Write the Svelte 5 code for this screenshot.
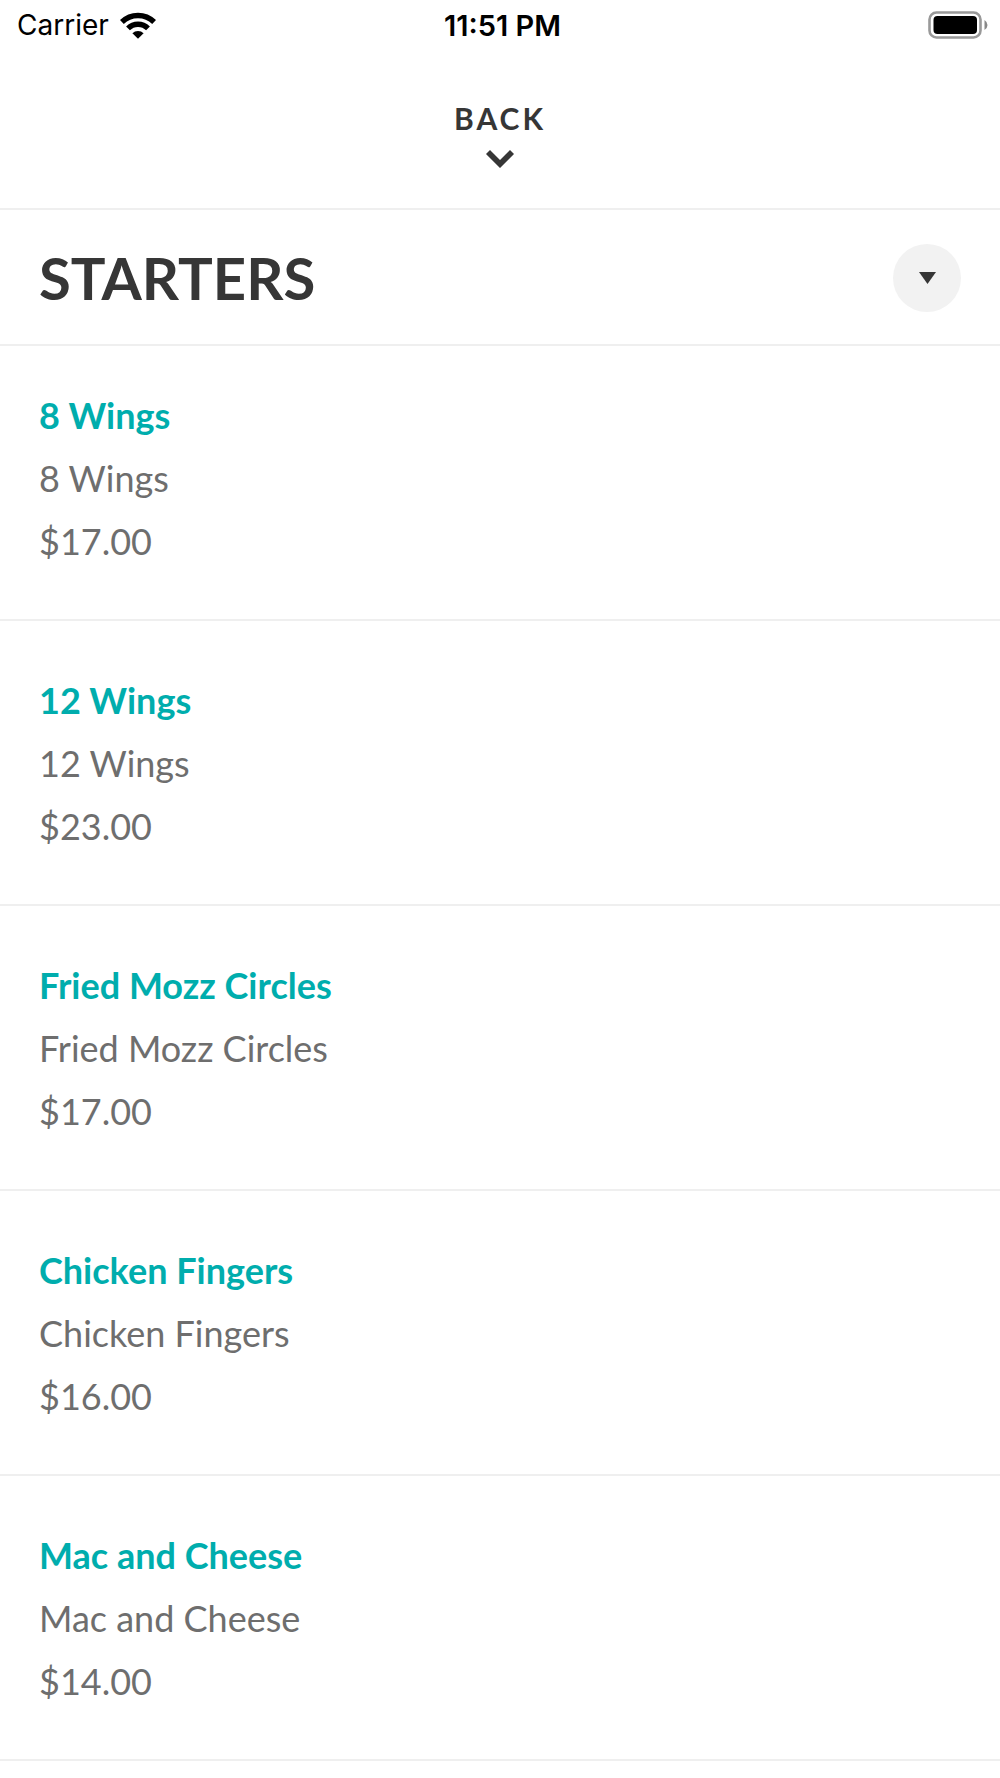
<script>
  let open = $state(true);

  const items = [
    { name: "8 Wings", description: "8 Wings", price: 17 },
    { name: "12 Wings", description: "12 Wings", price: 23 },
    { name: "Fried Mozz Circles", description: "Fried Mozz Circles", price: 17 },
    { name: "Chicken Fingers", description: "Chicken Fingers", price: 16 },
    { name: "Mac and Cheese", description: "Mac and Cheese", price: 14 }
  ];
</script>

<div class="screen">
  <div class="status">
    <div class="carrier">
      <span>Carrier</span>
      <svg width="36" height="27" viewBox="0 0 36 27" aria-hidden="true">
        <g fill="none" stroke="#000" stroke-width="5.4">
          <path d="M1.9 10 A23 23 0 0 1 34.1 10" />
          <path d="M8 16.4 A14.2 14.2 0 0 1 28 16.4" />
        </g>
        <path d="M12.4 21.2 A8 8 0 0 1 23.6 21.2 L18 26.8 Z" />
      </svg>
    </div>
    <span class="time">11:51 PM</span>
    <svg class="battery" width="60" height="28" viewBox="0 0 60 28" aria-hidden="true">
      <rect x="1.5" y="1.5" width="51" height="25" rx="7" fill="none" stroke="#999" stroke-width="2.6" />
      <rect x="5.5" y="5" width="43.5" height="18" rx="4" />
      <path d="M56.5 9 Q59.5 11 59.5 14 Q59.5 17 56.5 19 Z" fill="#888" />
    </svg>
  </div>

  <header>
    <button class="back" type="button">
      <span>BACK</span>
      <svg width="28" height="18" viewBox="0 0 28 18" aria-hidden="true">
        <path d="M4 0 L14 10 L24 0 L28 4 L14 18 L0 4 Z" fill="#363636" />
      </svg>
    </button>
  </header>

  <main>
    <div class="category">
      <h1>STARTERS</h1>
      <button class="toggle" type="button" aria-label="Toggle starters" aria-expanded={open} onclick={() => (open = !open)}>
        <svg width="17" height="12" viewBox="0 0 17 12" aria-hidden="true">
          <path d="M0 0 H17 L8.5 12 Z" fill="#363636" />
        </svg>
      </button>
    </div>

    {#if open}
      <ul>
        {#each items as item}
          <li>
            <h2>{item.name}</h2>
            <p>{item.description}</p>
            <p>${item.price.toFixed(2)}</p>
          </li>
        {/each}
      </ul>
    {/if}
  </main>
</div>

<style>
  :global(body) {
    margin: 0;
    background: #fff;
  }
  .screen {
    font-family: Lato, sans-serif;
    color: #363636;
  }
  h1, h2, p, ul { margin: 0; padding: 0; }
  button {
    border: 0;
    padding: 0;
    font: inherit;
    color: inherit;
    cursor: pointer;
  }
  svg { display: block; }

  .status {
    display: grid;
    grid-template-columns: 1fr auto 1fr;
    align-items: center;
    height: 50px;
    padding: 0 12px 0 17px;
    font-family: Inter, sans-serif;
    font-size: 28px;
    color: #000;
  }
  .carrier {
    display: flex;
    align-items: center;
    gap: 11px;
  }
  .time {
    font-size: 29px;
    font-weight: 600;
  }
  .battery { justify-self: end; }

  header {
    display: flex;
    justify-content: center;
    padding: 50px 0 40px;
    border-bottom: 2px solid #efefef;
  }
  .back {
    display: flex;
    flex-direction: column;
    align-items: center;
    gap: 14px;
    background: none;
    font-size: 30px;
    font-weight: 700;
    line-height: 36px;
    letter-spacing: 3px;
  }

  .category {
    display: flex;
    align-items: center;
    justify-content: space-between;
    padding: 34px 39px 32px;
    border-bottom: 2px solid #efefef;
  }
  h1 {
    font-size: 58px;
    font-weight: 700;
    line-height: 68px;
  }
  .toggle {
    display: flex;
    align-items: center;
    justify-content: center;
    width: 68px;
    height: 68px;
    border-radius: 50%;
    background: #f2f2f2;
  }

  ul { list-style: none; }
  li {
    padding: 48px 39px 46px;
    border-bottom: 2px solid #efefef;
    font-size: 36px;
    line-height: 63px;
  }
  li:first-child { padding-top: 38px; }
  h2 {
    font-size: 36px;
    font-weight: 700;
    color: #00adad;
  }
  p { color: #6e6e6e; }
</style>
